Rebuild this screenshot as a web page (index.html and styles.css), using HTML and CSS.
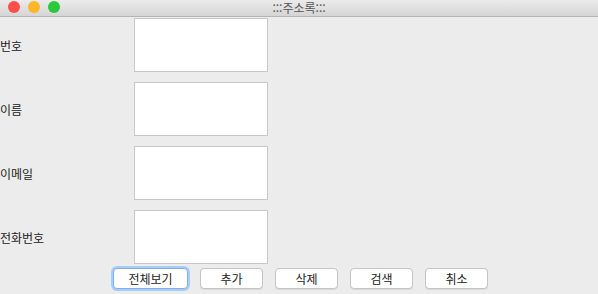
FILE: index.html
```html
<!DOCTYPE html>
<html lang="ko">
<head>
<meta charset="UTF-8">
<title>:::주소록:::</title>
<link rel="stylesheet" href="styles.css">
</head>
<body>
  <div class="window">
    <div class="titlebar">
      <div class="lights">
        <span class="light red"></span>
        <span class="light yellow"></span>
        <span class="light green"></span>
      </div>
      <div class="title">:::주소록:::</div>
    </div>

    <div class="form">
      <div class="row">
        <label>번호</label>
        <div class="field"></div>
      </div>
      <div class="row">
        <label>이름</label>
        <div class="field"></div>
      </div>
      <div class="row">
        <label>이메일</label>
        <div class="field"></div>
      </div>
      <div class="row">
        <label>전화번호</label>
        <div class="field"></div>
      </div>
    </div>

    <div class="buttons">
      <button class="btn wide focus">전체보기</button>
      <button class="btn">추가</button>
      <button class="btn">삭제</button>
      <button class="btn">검색</button>
      <button class="btn">취소</button>
    </div>
  </div>
</body>
</html>
```

FILE: styles.css
```css
body {
  margin: 0;
  font-family: "Noto Sans CJK KR", "Noto Sans", sans-serif;
  background-color: #ececec;
  overflow: hidden;
}

.window {
  width: 598px;
  height: 294px;
  background-color: #ececec;
}

.titlebar {
  position: relative;
  height: 16px;
  background: linear-gradient(#ebebeb, #d5d5d5);
  border-bottom: 1px solid #b4b4b4;
}

.lights {
  display: flex;
  gap: 8px;
  padding: 1px 0 0 8px;
}

.light {
  width: 12px;
  height: 12px;
  border-radius: 50%;
}

.red { background-color: #fd4e49; }
.yellow { background-color: #fdb529; }
.green { background-color: #2ac83b; }

.title {
  position: absolute;
  top: 0;
  left: 0;
  right: 0;
  text-align: center;
  font-size: 12px;
  line-height: 16px;
  color: #555;
}

.form {
  display: flex;
  flex-direction: column;
  gap: 10px;
  padding-top: 1px;
}

.row {
  display: flex;
  align-items: center;
  height: 54px;
}

.row label {
  width: 134px;
  font-size: 12px;
  color: #222;
  padding-top: 1px;
}

.field {
  width: 132px;
  height: 52px;
  background-color: #fff;
  border: 1px solid #c8c8c8;
}

.buttons {
  display: flex;
  gap: 12px;
  padding: 4px 0 0 113px;
}

.btn {
  width: 63px;
  height: 21px;
  padding: 0;
  font-family: inherit;
  font-size: 12px;
  color: #222;
  background-color: #fff;
  border: 1px solid #c4c4c4;
  border-radius: 4px;
  box-shadow: 0 1px 0 rgba(0, 0, 0, 0.08);
}

.btn.wide {
  width: 75px;
}

.btn.focus {
  border-color: #7eb0ee;
  box-shadow: 0 0 0 2px #a9ccf6;
}
```
